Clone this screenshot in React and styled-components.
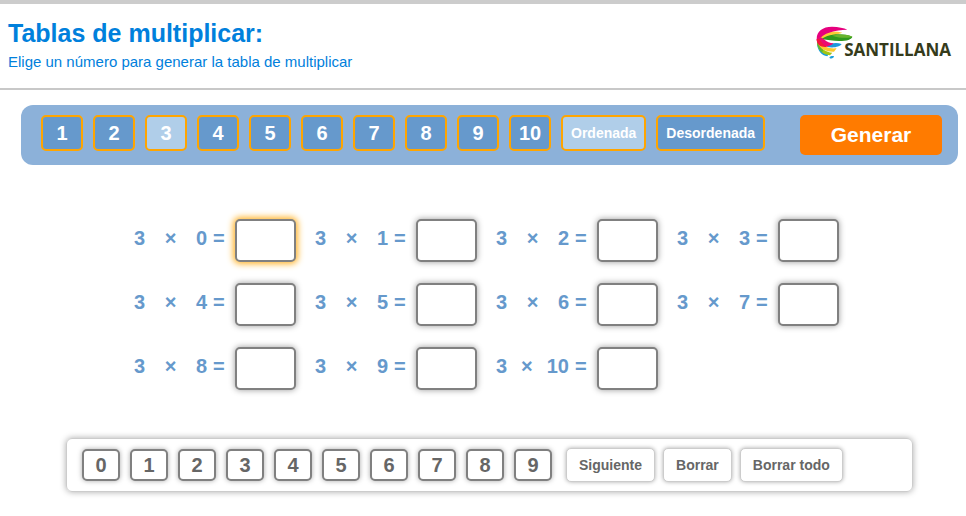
import React, { useState } from "react"
import styled, { createGlobalStyle } from "styled-components"

const GlobalStyle = createGlobalStyle`
	* {
		box-sizing: border-box;
	}
	body {
		margin: 0;
		background-color: #fff;
		font-family: "Liberation Sans", Arial, sans-serif;
	}
	button, input {
		font-family: inherit;
	}
	button {
		cursor: pointer;
	}
`
const Header = styled.header`
	display: flex;
	align-items: flex-start;
	justify-content: space-between;
	padding: 14px 15px 16px 8px;
	border-top: 4px solid #ccc;
	border-bottom: 2px solid #c8c8c8;
	color: #0080dc;
`
const Title = styled.h1`
	margin: 0;
	font-size: 25px;
	line-height: 30px;
`
const Subtitle = styled.p`
	margin: 4px 0 0;
	font-size: 15px;
	line-height: 20px;
`
const Brand = styled.div`
	display: flex;
	align-items: flex-start;
	margin-top: 8px;
	color: #353b1b;
`
const BrandMark = styled.svg`
	display: block;
	width: 38px;
	height: 34px;
`
const BrandName = styled.span`
	margin: 14px 0 0 -10px;
	font-family: "Open Sans", sans-serif;
	font-size: 17px;
	font-weight: 700;
	line-height: 20px;
`
const Toolbar = styled.section`
	display: flex;
	align-items: flex-start;
	justify-content: space-between;
	margin: 15px 8px 0 21px;
	padding: 10px 16px 10px 20px;
	border-radius: 12px;
	background-color: #8cb1d9;
`
const Options = styled.div`
	display: flex;
	gap: 10px;
`
const OptionButton = styled.button`
	min-width: 42px;
	height: 36px;
	padding: 0 ${({ $text }) => ($text ? 8 : 0)}px;
	border: 2px solid #ffa500;
	border-radius: 5px;
	background-color: ${({ $active }) => ($active ? "#b0cee9" : "#6699cc")};
	color: #fff;
	font-size: ${({ $text }) => ($text ? 14 : 20)}px;
	font-weight: bold;
`
const GenerateButton = styled.button`
	width: 142px;
	height: 40px;
	padding: 0;
	border: none;
	border-radius: 5px;
	background-color: #ff7b00;
	color: #fff;
	font-size: 21px;
	font-weight: bold;
`
const Exercises = styled.main`
	display: grid;
	grid-template-columns: repeat(4, max-content);
	gap: 21px 19px;
	margin: 54px 0 0 134px;
`
const Exercise = styled.label`
	display: flex;
	align-items: center;
	color: #6699cc;
	font-size: 20px;
	font-weight: bold;
	line-height: 24px;
`
const Operation = styled.span`
	display: flex;
	justify-content: space-between;
	width: 73px;
	margin-bottom: 6px;
`
const Equals = styled.span`
	width: 12px;
	margin: 0 10px 6px 6px;
`
const Answer = styled.input`
	width: 61px;
	height: 43px;
	padding: 0;
	border: 2px solid #808080;
	border-radius: 5px;
	outline: none;
	background-color: #fff;
	box-shadow: 0 0 6px ${({ $current }) => ($current ? "2px #ffb52e" : "#999")};
	color: #666;
	font-size: 20px;
	font-weight: bold;
	text-align: center;
`
const Keypad = styled.section`
	display: flex;
	align-items: center;
	margin: 48px 53px 24px 66px;
	padding: 9px 15px;
	border: 1px solid #ccc;
	border-radius: 6px;
	box-shadow: 0 0 6px #aaa;
`
const Keys = styled.div`
	display: flex;
	gap: 10px;
	margin-right: 14px;
`
const Key = styled.button`
	width: 38px;
	height: 32px;
	padding: 0;
	border: 2px solid #808080;
	border-radius: 5px;
	background-color: #fff;
	box-shadow: 0 0 5px #aaa;
	color: #666;
	font-size: 20px;
	font-weight: bold;
`
const Actions = styled.div`
	display: flex;
	gap: 8px;
`
const ActionButton = styled.button`
	height: 34px;
	padding: 0 12px;
	border: 1px solid #ccc;
	border-radius: 5px;
	background-color: #fff;
	box-shadow: 0 0 4px #aaa;
	color: #666;
	font-size: 14px;
	font-weight: bold;
`

const tables = [1, 2, 3, 4, 5, 6, 7, 8, 9, 10]
const digits = [0, 1, 2, 3, 4, 5, 6, 7, 8, 9]
const ordered = [0, 1, 2, 3, 4, 5, 6, 7, 8, 9, 10]

const Logo = () => (
	<Brand>
		<BrandMark viewBox="50 48 114 102" aria-hidden="true">
			<path d="M53 102C55 122 66 136 84 139L88 133C74 128 64 116 58 102Z" fill="#1a9fdc" />
			<path d="M53 96C54 118 68 134 92 136L99 128C80 128 66 116 58 100Z" fill="#a3c614" />
			<path d="M53 94C54 110 60 121 68 127L72 121C64 114 60 106 57 98Z" fill="#5cb531" />
			<path d="M57 102C64 118 82 126 104 125L112 115C92 117 74 112 62 100Z" fill="#fcc92d" />
			<path d="M82 110C92 99 110 96 127 102C121 111 100 115 82 110Z" fill="#1b98dc" />
			<path d="M56 92C60 72 90 58 129 68C112 74 86 78 66 94Z" fill="#fccb35" />
			<path d="M62 92C76 74 122 66 159 80C157 91 130 96 92 91L70 88Z" fill="#2f9a1d" />
			<path d="M98 77C120 71 146 73 159 80C150 85 122 85 98 77Z" fill="#68b52c" />
			<path d="M53 94C48 68 66 50 98 50C118 50 134 54 144 59C108 60 70 68 57 92Z" fill="#e6007e" />
			<path d="M52 88C56 80 66 80 74 88C82 96 92 100 103 100C92 113 54 116 52 88Z" fill="#ec0a72" />
			<path d="M52 88C52 108 70 114 86 110C72 106 66 96 60 86Z" fill="#f4173e" />
			<path d="M90 143C94 137 102 138 104 139C103 145 95 148 90 143Z" fill="#1a9fdc" />
		</BrandMark>
		<BrandName>SANTILLANA</BrandName>
	</Brand>
)

const App = () => {
	const [selected, setSelected] = useState(3)
	const [table, setTable] = useState(3)
	const [shuffled, setShuffled] = useState(false)
	const [factors, setFactors] = useState(ordered)
	const [current, setCurrent] = useState(0)
	const [answers, setAnswers] = useState({})

	const generate = () => {
		setTable(selected)
		setFactors(shuffled ? [...ordered].sort(() => Math.random() - 0.5) : ordered)
		setAnswers({})
		setCurrent(0)
	}
	const setAnswer = (index, value) => {
		setAnswers(prev => ({ ...prev, [index]: value }))
	}

	return (
		<>
			<GlobalStyle />
			<Header>
				<div>
					<Title>Tablas de multiplicar:</Title>
					<Subtitle>Elige un número para generar la tabla de multiplicar</Subtitle>
				</div>
				<Logo />
			</Header>
			<Toolbar>
				<Options>
					{tables.map(n => (
						<OptionButton key={n} $active={selected === n} onClick={() => setSelected(n)}>
							{n}
						</OptionButton>
					))}
					<OptionButton $text $active={!shuffled} onClick={() => setShuffled(false)}>
						Ordenada
					</OptionButton>
					<OptionButton $text $active={shuffled} onClick={() => setShuffled(true)}>
						Desordenada
					</OptionButton>
				</Options>
				<GenerateButton onClick={generate}>Generar</GenerateButton>
			</Toolbar>
			<Exercises>
				{factors.map((factor, index) => (
					<Exercise key={factor} htmlFor={`answer-${index}`}>
						<Operation>
							<span>{table}</span>
							<span>×</span>
							<span>{factor}</span>
						</Operation>
						<Equals>=</Equals>
						<Answer
							id={`answer-${index}`}
							type="text"
							inputMode="numeric"
							$current={current === index}
							value={answers[index] || ""}
							onFocus={() => setCurrent(index)}
							onChange={e => setAnswer(index, e.target.value)}
						/>
					</Exercise>
				))}
			</Exercises>
			<Keypad>
				<Keys>
					{digits.map(n => (
						<Key key={n} onClick={() => setAnswer(current, `${answers[current] || ""}${n}`)}>
							{n}
						</Key>
					))}
				</Keys>
				<Actions>
					<ActionButton onClick={() => setCurrent((current + 1) % factors.length)}>Siguiente</ActionButton>
					<ActionButton onClick={() => setAnswer(current, "")}>Borrar</ActionButton>
					<ActionButton onClick={() => setAnswers({})}>Borrar todo</ActionButton>
				</Actions>
			</Keypad>
		</>
	)
}

export default App
